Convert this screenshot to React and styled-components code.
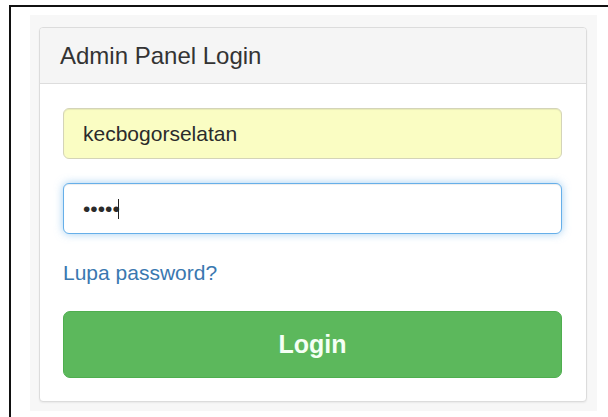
import React from 'react'
import styled, { createGlobalStyle } from 'styled-components'

const GlobalStyle = createGlobalStyle`
  html, body {
    margin: 0;
    padding: 0;
    background: #fff;
  }
  body {
    font-family: "Liberation Sans", Arial, Helvetica, sans-serif;
    color: #333;
  }
`

// black window edge that frames the page
const Frame = styled.div`
  margin: 5px 0 0 9px;
  border-top: 2px solid #111;
  border-left: 2px solid #111;
  min-height: 420px;
  box-sizing: border-box;
`

const Backdrop = styled.div`
  margin: 8px 0 0 19px;
  width: 567px;
  padding: 12px 10px 9px 9px;
  background: #f7f7f7;
  box-sizing: border-box;
`

const Panel = styled.div`
  background: #fff;
  border: 1px solid #dcdcdc;
  border-radius: 4px;
  box-shadow: 0 1px 2px rgba(0, 0, 0, 0.06);
  overflow: hidden;
`

const PanelHeading = styled.div`
  height: 55px;
  display: flex;
  align-items: center;
  padding: 0 20px;
  background: #f5f5f5;
  border-bottom: 1px solid #dddddd;
`

const PanelTitle = styled.h3`
  margin: 0;
  font-size: 24px;
  font-weight: 400;
  color: #333;
`

const PanelBody = styled.form`
  display: flex;
  flex-direction: column;
  padding: 24px 24px 23px 23px;
`

const Input = styled.input`
  box-sizing: border-box;
  width: 100%;
  height: 51px;
  padding: 0 19px;
  font-family: inherit;
  font-size: 21px;
  color: #2b2b2b;
  border-radius: 6px;
  outline: none;
  background: ${p => (p.$autofill ? '#fafdc3' : '#fff')};
  border: 1px solid ${p => (p.$focused ? '#66afe9' : p.$autofill ? '#d4d4b8' : '#ccc')};
  box-shadow: ${p =>
    p.$focused
      ? 'inset 0 1px 1px rgba(0,0,0,.075), 0 0 8px rgba(102,175,233,.6)'
      : 'inset 0 1px 1px rgba(0,0,0,.075)'};
`

const PasswordWrap = styled.div`
  position: relative;
  margin-top: 24px;
`

// text caret sitting after the masked characters
const Caret = styled.span`
  position: absolute;
  left: 55px;
  top: 16px;
  width: 1px;
  height: 20px;
  background: #222;
`

const ForgotLink = styled.a`
  display: block;
  margin-top: 24px;
  font-size: 21px;
  line-height: 30px;
  color: #3a78b0;
  text-decoration: none;
  align-self: flex-start;
`

const LoginButton = styled.button`
  margin-top: 23px;
  height: 67px;
  width: 100%;
  font-family: inherit;
  font-size: 25px;
  font-weight: 700;
  color: #f4fff4;
  background: #5cb85c;
  border: 1px solid #4fae4f;
  border-radius: 7px;
  cursor: pointer;
`

export default function App() {
  return (
    <>
      <GlobalStyle />
      <Frame>
        <Backdrop>
          <Panel>
            <PanelHeading>
              <PanelTitle>Admin Panel Login</PanelTitle>
            </PanelHeading>
            <PanelBody onSubmit={e => e.preventDefault()}>
              <Input $autofill type="text" defaultValue="kecbogorselatan" />
              <PasswordWrap>
                <Input $focused type="password" defaultValue="12345" />
                <Caret />
              </PasswordWrap>
              <ForgotLink href="#">Lupa password?</ForgotLink>
              <LoginButton type="submit">Login</LoginButton>
            </PanelBody>
          </Panel>
        </Backdrop>
      </Frame>
    </>
  )
}
